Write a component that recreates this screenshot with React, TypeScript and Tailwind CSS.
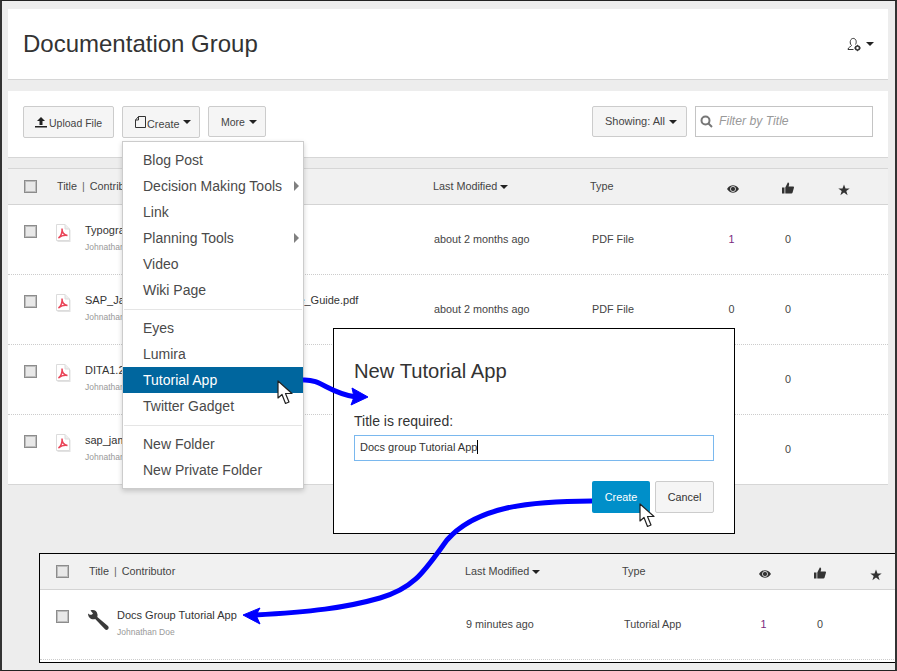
import React from 'react';

// Caret used on buttons and sort headers
function Caret({ className = '' }: { className?: string }) {
  return <span className={`inline-block w-0 h-0 border-x-[4px] border-x-transparent border-t-[4px] border-t-[#222] ${className}`} />;
}

function Checkbox() {
  return (
    <span className="block w-[13px] h-[13px] border border-[#8c8c8c] bg-[#e8e8e8] shadow-[inset_0_0_0_1px_#bdbdbd]" />
  );
}

function PdfIcon() {
  return (
    <svg width="16" height="19" viewBox="0 0 16 19" className="block">
      <path d="M2.5 2H11L15.5 6V18H2.5Z" fill="#e2e2e2" />
      <path d="M1.5 .5H10L14.5 5V16.5H1.5Z" fill="#fff" stroke="#dcdcdc" />
      <path d="M10 .5V5H14.5" fill="#eee" stroke="#dcdcdc" />
      <path d="M3.5 14C6 12.5 7.5 8 7 4.5C7 8 9 11 12.5 11.5C9.5 11 6 12 3.5 14Z" fill="none" stroke="#ea4458" strokeWidth="1.5" />
    </svg>
  );
}

function WrenchIcon() {
  return (
    <svg width="22" height="22" viewBox="0 0 22 22" className="block">
      <path d="M1 4.5C3 6.5 5 6 6 4.5L3.5 1.5C6.5 .2 10 1.5 10.5 5.5C10.6 6.5 10.5 7.2 10.3 8L21 17C22 18.2 21.8 19.5 21 20.3C20 21.2 18.7 21 18 20.2L8.2 10C5 11.3 1 9 1 4.5Z" fill="#3a3a3a" />
    </svg>
  );
}

function EyeIcon() {
  return (
    <svg width="12" height="8" viewBox="0 0 12 8" className="block mt-[4px]">
      <path d="M0 4C2 1 4 .3 6 .3S10 1 12 4C10 7 8 7.7 6 7.7S2 7 0 4Z" fill="#333" />
      <circle cx="6" cy="4" r="2.6" fill="#333" stroke="#eee" strokeWidth=".8" />
    </svg>
  );
}

function ThumbIcon() {
  return (
    <svg width="12" height="12" viewBox="0 0 12 12" className="block mt-[3px]">
      <path d="M0 5.5H2.5V11.5H0Z M3.3 5.5L5.8 .5C7 .5 7.4 1.6 7 3L6.6 4.5H11C12 4.5 12.2 5.5 11.8 6.2L10.5 10.8C10.3 11.3 10 11.5 9.5 11.5H3.3Z" fill="#333" />
    </svg>
  );
}

function StarIcon() {
  return (
    <svg width="12" height="12" viewBox="0 0 12 12" className="block mt-[6px]">
      <path d="M6 .5L7.5 4.4H11.7L8.3 6.9L9.6 11.2L6 8.6L2.4 11.2L3.7 6.9L.3 4.4H4.5Z" fill="#333" />
    </svg>
  );
}

function Cursor({ className }: { className: string }) {
  return (
    <svg width="17" height="25" viewBox="0 0 17 25" className={className}>
      <path d="M1 1V18L5 14.5L8.5 23.5L12 22L8.5 13.5H15Z" fill="#fff" stroke="#222" strokeWidth="1.2" strokeLinejoin="round" />
    </svg>
  );
}

function TableHeader() {
  return (
    <div className="grid grid-cols-[33px_376px_157px_137px_55px_56px_40px] items-center h-9 pl-4 bg-[#f1f1f1] border-b border-[#d4d4d4] text-[10.8px] text-[#444]">
      <Checkbox />
      <span>
        Title <span className="mx-0.5 text-[#666]">|</span> Contributor
      </span>
      <span className="flex items-center gap-[3px]">
        Last Modified <Caret />
      </span>
      <span>Type</span>
      <EyeIcon />
      <ThumbIcon />
      <StarIcon />
    </div>
  );
}

interface RowProps {
  icon: React.ReactNode;
  title: string;
  contributor: string;
  modified: string;
  type: string;
  views: string;
  likes: string;
  height: string;
  last?: boolean;
}

function TableRow({ icon, title, contributor, modified, type, views, likes, height, last }: RowProps) {
  return (
    <div className={`grid grid-cols-[31px_30px_349px_158px_136.5px_56.5px_40px] items-start pl-4 pt-5 text-[10.8px] text-[#444] ${last ? '' : 'border-b border-dotted border-[#ccc]'} ${height}`}>
      <Checkbox />
      <span className="-mt-px">{icon}</span>
      <div className="-mt-[2px]">
        <div className="leading-[14px] text-[11px] text-[#333] whitespace-nowrap">{title}</div>
        <div className="mt-[4px] text-[8.5px] leading-[12px] text-[#999]">{contributor}</div>
      </div>
      <span className="pt-[6px]">{modified}</span>
      <span className="pt-[6px]">{type}</span>
      <span className={`pt-[6px] ${views === '1' ? 'text-[#7a2a80]' : ''}`}>{views}</span>
      <span className="pt-[6px]">{likes}</span>
    </div>
  );
}

const menuGroups = [
  [
    { label: 'Blog Post' },
    { label: 'Decision Making Tools', sub: true },
    { label: 'Link' },
    { label: 'Planning Tools', sub: true },
    { label: 'Video' },
    { label: 'Wiki Page' },
  ],
  [{ label: 'Eyes' }, { label: 'Lumira' }, { label: 'Tutorial App', active: true }, { label: 'Twitter Gadget' }],
  [{ label: 'New Folder' }, { label: 'New Private Folder' }],
];

function CreateMenu() {
  return (
    <div className="absolute left-[120px] top-[140px] w-[182px] h-[348px] bg-white border border-[#ccc] shadow-[0_2px_5px_rgba(0,0,0,0.18)] py-[5px] text-[14px] text-[#4a4a4a]">
      {menuGroups.map((group, i) => (
        <div key={i}>
          {i > 0 && <div className="mx-px mt-[6px] mb-[5px] h-px bg-[#e5e5e5]" />}
          {group.map((item: { label: string; sub?: boolean; active?: boolean }) => (
            <div
              key={item.label}
              className={`relative h-[26px] leading-[26px] pl-5 ${item.active ? 'bg-[#00669e] text-white' : ''}`}
            >
              {item.label}
              {item.sub && (
                <span className="absolute right-[4px] top-[8px] w-0 h-0 border-y-[5px] border-y-transparent border-l-[5px] border-l-[#808080]" />
              )}
            </div>
          ))}
        </div>
      ))}
    </div>
  );
}

function TutorialDialog() {
  return (
    <div className="absolute left-[331px] top-[327px] w-[402px] h-[206px] bg-white border border-black px-5 pt-[27px] text-[#333]">
      <h2 className="text-[20.2px] leading-[30px]">New Tutorial App</h2>
      <div className="mt-[25px] text-[14px] leading-5">Title is required:</div>
      <div className="mt-[4px] flex items-center h-[26px] w-[360px] px-[5px] pb-[2px] border border-[#7ab8ee] text-[11px]">
        Docs group Tutorial App<span className="inline-block w-px h-[14px] bg-black" />
      </div>
      <div className="mt-[20px] flex justify-end gap-[5px] w-[360px]">
        <div className="flex items-center justify-center w-[58px] h-8 rounded-[2px] bg-[#008fc9] text-[10.8px] text-white">Create</div>
        <div className="flex items-center justify-center w-[59px] h-8 rounded-[2px] bg-[#f5f5f5] border border-[#ccc] text-[10.8px]">Cancel</div>
      </div>
    </div>
  );
}

function Arrows() {
  return (
    <svg width="897" height="671" viewBox="0 0 897 671" className="absolute left-[-2px] top-[-1px] pointer-events-none">
      <path d="M303 380C322 379 328 393 356 397" fill="none" stroke="#0000ff" strokeWidth="5" />
      <path d="M352 388L368 397L351 405L354 397Z" fill="#0000ff" stroke="#0000ff" />
      <path d="M592 501C525 501 475 508 447 540C425 570 415 588 380 598C345 608 310 612 255 615" fill="none" stroke="#0000ff" strokeWidth="5" />
      <path d="M260 608L243 615L260 624L256 615Z" fill="#0000ff" stroke="#0000ff" />
    </svg>
  );
}

export default function App() {
  const card = 'bg-white border-b border-[#d6d6d6]';
  const btn = 'flex items-center border border-[#ccc] rounded-[2px] bg-[#f5f5f5] text-[#444]';
  return (
    <div className="relative w-[897px] h-[671px] overflow-hidden bg-[#ededed] border-x-2 border-y border-x-[#333] border-y-[#222] font-['Liberation_Sans',Arial,sans-serif]">
      <div className="pl-[6px] pr-[7px] pt-2">
        <div className={`${card} h-[71px] flex items-center justify-between pl-[15px] pr-[14px]`}>
          <h1 className="text-[24px] text-[#333]">Documentation Group</h1>
          <div className="flex items-center gap-[4px]">
            <svg width="15" height="15" viewBox="0 0 15 15" fill="none" stroke="#333" className="block">
              <path d="M1 12.5C1 10 4 10 4.5 8.5C3 7 3 5 3.5 3.5C4.5 .7 8 .7 9 3.5C9.4 5 9.2 6.5 8.5 7.5" />
              <path d="M1 12.5H6.5" />
              <circle cx="10.5" cy="11" r="2" strokeWidth="1.6" />
              <path d="M10.5 7.8V9M10.5 13V14.2M7.3 11H8.5M12.5 11H13.7" />
            </svg>
            <Caret />
          </div>
        </div>
        <div className={`${card} h-[67px] mt-[11px] flex items-start pt-[15px] pl-[15px] pr-[15px]`}>
          <div className={`${btn} h-8 w-[91px] pl-[11px] gap-[2px] text-[10.5px]`}>
            <svg width="12" height="12" viewBox="0 0 12 12" fill="#222" className="block">
              <path d="M6 1L10 5H7.5V9H4.5V5H2Z M0 10H12V11.5H0Z" />
            </svg>
            <span className="mt-[4px]">Upload File</span>
          </div>
          <div className={`${btn} h-8 ml-2 w-[78px] pl-3 gap-px text-[10.8px]`}>
            <svg width="11" height="12" viewBox="0 0 11 12" fill="none" stroke="#333" className="block">
              <path d="M.5 4L3.5 .5H10.5V11.5H.5Z" />
              <path d="M3.5 .5V4H.5" />
            </svg>
            <span className="mt-[4px]">Create</span>
            <Caret className="ml-[3px]" />
          </div>
          <div className={`${btn} h-[31px] ml-2 w-[58px] pl-3 gap-[4px] text-[10.5px]`}>
            <span className="mt-[2px]">More</span>
            <Caret />
          </div>
          <div className={`${btn} h-[31px] ml-auto w-[95px] pl-3 gap-[4px] text-[11px]`}>
            Showing: All <Caret />
          </div>
          <div className="ml-2 flex items-center w-[178px] h-[31px] pl-1 border border-[#c4c4c4] text-[12.2px] italic text-[#999]">
            <svg width="13" height="13" viewBox="0 0 13 13" fill="none" stroke="#777" strokeWidth="2" className="block mr-[6px]">
              <circle cx="5.5" cy="5.5" r="4" />
              <path d="M8.5 8.5L12 12" />
            </svg>
            Filter by Title
          </div>
        </div>
        <div className={`${card} mt-[10px] border-t`}>
          <TableHeader />
          <TableRow icon={<PdfIcon />} title="Typography.pdf" contributor="Johnathan Doe" modified="about 2 months ago" type="PDF File" views="1" likes="0" height="h-[70px]" />
          <TableRow icon={<PdfIcon />} title="SAP_Jam_Collaboration_Administrator_Role_Guide.pdf" contributor="Johnathan Doe" modified="about 2 months ago" type="PDF File" views="0" likes="0" height="h-[70px]" />
          <TableRow icon={<PdfIcon />} title="DITA1.2.pdf" contributor="Johnathan Doe" modified="about 2 months ago" type="PDF File" views="0" likes="0" height="h-[70px]" />
          <TableRow icon={<PdfIcon />} title="sap_jam.pdf" contributor="Johnathan Doe" modified="about 2 months ago" type="PDF File" views="0" likes="0" height="h-[69px]" last />
        </div>
      </div>
      <div className="ml-[37px] mt-[68px] h-[110px] w-[860px] bg-white border border-black">
        <TableHeader />
        <TableRow icon={<WrenchIcon />} title="Docs Group Tutorial App" contributor="Johnathan Doe" modified="9 minutes ago" type="Tutorial App" views="1" likes="0" height="h-[70px]" />
      </div>
      <CreateMenu />
      <TutorialDialog />
      <Arrows />
      <Cursor className="absolute left-[275px] top-[379px]" />
      <Cursor className="absolute left-[637px] top-[502px]" />
    </div>
  );
}
